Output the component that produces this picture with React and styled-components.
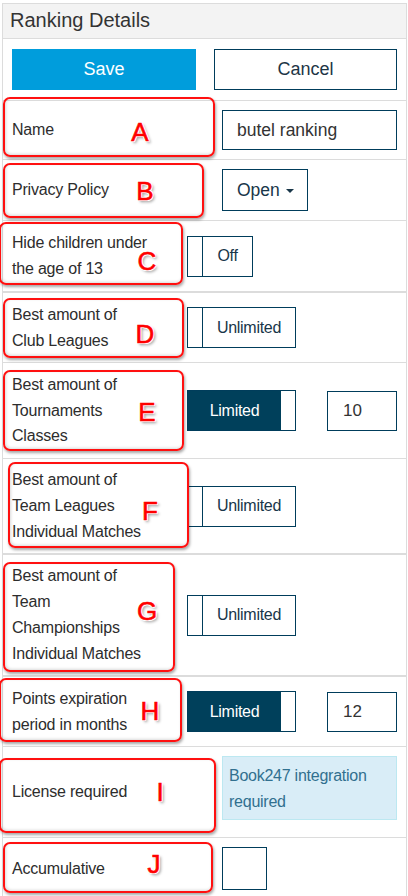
import React from 'react';
import styled, { createGlobalStyle } from 'styled-components';

const GlobalStyle = createGlobalStyle`
    body {
        margin: 0;
        background: #fff;
        font-family: "Liberation Sans", Arial, sans-serif;
    }
`

const Page = styled.div`
    position: relative;
    width: 408px;
    height: 896px;
    overflow: hidden;
`

const Panel = styled.div`
    margin: 3px 0 0 2px;
    width: 405px;
    box-sizing: border-box;
    border: 1px solid #dcdcdc;
    border-bottom: none;
`

const Header = styled.div`
    height: 34px;
    background: #f3f3f3;
    border-bottom: 1px solid #dcdcdc;
    padding-left: 7px;
    font-size: 20px;
    line-height: 32px;
    color: #333;
`

const Actions = styled.div`
    display: grid;
    grid-template-columns: 184px 183px;
    column-gap: 18px;
    padding: 10px 9px 10px 9px;
`

const SaveButton = styled.button`
    height: 41px;
    border: none;
    background: #009ddc;
    color: #fff;
    font-family: inherit;
    font-size: 18px;
`

const CancelButton = styled.button`
    height: 41px;
    border: 1px solid #003d5b;
    background: #fff;
    color: #1d3546;
    font-family: inherit;
    font-size: 18px;
`

// one setting line, label on the left, control on the right
const Row = styled.div`
    display: flex;
    align-items: center;
    box-sizing: border-box;
    height: ${p => p.$h}px;
    border-top: ${p => (p.$thick ? 2 : 1)}px solid #dcdcdc;
    padding: 0 9px 0 9px;
`

const Label = styled.div`
    width: ${p => p.$w}px;
    flex: none;
    font-size: 16px;
    line-height: 25.8px;
    letter-spacing: -0.2px;
    color: #2d2d2d;
    white-space: nowrap;
`

const TextInput = styled.div`
    box-sizing: border-box;
    width: ${p => p.$w}px;
    height: 40px;
    border: 1px solid #003d5b;
    padding-left: ${p => p.$pad}px;
    font-size: 17.5px;
    line-height: 38px;
    color: #333;
`

const DropButton = styled.div`
    box-sizing: border-box;
    display: flex;
    align-items: center;
    gap: 6px;
    width: 86px;
    height: 42px;
    border: 1px solid #003d5b;
    padding-left: 14px;
    font-size: 17.5px;
    color: #183649;
`

const Caret = styled.span`
    width: 0;
    height: 0;
    border-left: 4px solid transparent;
    border-right: 4px solid transparent;
    border-top: 4px solid #183649;
    margin-top: 2px;
`

const Toggle = styled.div`
    box-sizing: border-box;
    display: flex;
    width: ${p => p.$w}px;
    height: 41px;
    border: 1px solid #003d5b;
    flex: none;
`

const Knob = styled.div`
    width: 14px;
    flex: none;
    background: #fff;
    border-right: ${p => (p.$on ? 'none' : '1px solid #003d5b')};
`

const ToggleText = styled.div`
    flex: 1;
    display: flex;
    align-items: center;
    justify-content: center;
    font-size: 16px;
    letter-spacing: -0.3px;
    background: ${p => (p.$on ? '#00405b' : '#fff')};
    color: ${p => (p.$on ? '#fff' : '#183649')};
`

const ValueInput = styled(TextInput)`
    margin-left: 31px;
    font-size: 17px;
`

const Alert = styled.div`
    box-sizing: border-box;
    width: 175px;
    height: 64px;
    margin-bottom: 8px;
    padding: 6px 6px 0 6px;
    background: #d9edf7;
    border: 1px solid #bce8f1;
    color: #31708f;
    font-size: 16px;
    line-height: 26px;
    letter-spacing: -0.25px;
`

const Checkbox = styled.div`
    box-sizing: border-box;
    width: 45px;
    height: 43px;
    border: 1px solid #003d5b;
`

// red annotation frames drawn over the form
const Mark = styled.div`
    position: absolute;
    left: ${p => p.$x}px;
    top: ${p => p.$y}px;
    width: ${p => p.$w}px;
    height: ${p => p.$h}px;
    box-sizing: border-box;
    border: 2px solid #ff1010;
    border-radius: 7px;
    box-shadow: 1px 2px 3px rgba(0, 0, 0, 0.35), inset 1px -1px 3px rgba(0, 0, 0, 0.15);
`

const Letter = styled.div`
    position: absolute;
    left: ${p => p.$x}px;
    top: ${p => p.$y}px;
    transform: translate(-50%, -50%);
    font-size: 26px;
    line-height: 1;
    color: #ff0000;
    -webkit-text-stroke: 0.6px #ff0000;
    text-shadow: 1px 0 0 #fff, -1px 0 0 #fff, 0 1px 0 #fff, 0 -1px 0 #fff,
        1px 1px 0 #fff, -1px -1px 0 #fff, 1px -1px 0 #fff, -1px 1px 0 #fff,
        2px 2px 3px rgba(0, 0, 0, 0.45);
`

const marks = [
    { l: 'A', x: 3, y: 97, w: 212, h: 60, lx: 140, ly: 132 },
    { l: 'B', x: 3, y: 163, w: 201, h: 55, lx: 145, ly: 191 },
    { l: 'C', x: -1, y: 222, w: 184, h: 63, lx: 147, ly: 261 },
    { l: 'D', x: 3, y: 298, w: 181, h: 60, lx: 145, ly: 334 },
    { l: 'E', x: 3, y: 370, w: 181, h: 81, lx: 147, ly: 412 },
    { l: 'F', x: 8, y: 462, w: 181, h: 86, lx: 150, ly: 511 },
    { l: 'G', x: 3, y: 562, w: 172, h: 110, lx: 147, ly: 611 },
    { l: 'H', x: -1, y: 678, w: 183, h: 64, lx: 150, ly: 711 },
    { l: 'I', x: -1, y: 758, w: 217, h: 75, lx: 160, ly: 792 },
    { l: 'J', x: 3, y: 842, w: 210, h: 51, lx: 154, ly: 864 },
]

const Switch = ({ on, width, children }) => (
    <Toggle $w={width}>
        {on ? (
            <>
                <ToggleText $on>{children}</ToggleText>
                <Knob $on />
            </>
        ) : (
            <>
                <Knob />
                <ToggleText>{children}</ToggleText>
            </>
        )}
    </Toggle>
)

export default function App() {
    return (
        <Page>
            <GlobalStyle />
            <Panel>
                <Header>Ranking Details</Header>
                <Actions>
                    <SaveButton>Save</SaveButton>
                    <CancelButton>Cancel</CancelButton>
                </Actions>

                <Row $h={59}>
                    <Label $w={210}>Name</Label>
                    <TextInput $w={175} $pad={14}>butel ranking</TextInput>
                </Row>

                <Row $h={61}>
                    <Label $w={210}>Privacy Policy</Label>
                    <DropButton>Open <Caret /></DropButton>
                </Row>

                <Row $h={71}>
                    <Label $w={175}>Hide children under<br />the age of 13</Label>
                    <Switch width={66}>Off</Switch>
                </Row>

                <Row $h={71} $thick>
                    <Label $w={175}>Best amount of<br />Club Leagues</Label>
                    <Switch width={109}>Unlimited</Switch>
                </Row>

                <Row $h={96}>
                    <Label $w={175}>Best amount of<br />Tournaments<br />Classes</Label>
                    <Switch on width={109}>Limited</Switch>
                    <ValueInput $w={71} $pad={15}>10</ValueInput>
                </Row>

                <Row $h={95}>
                    <Label $w={175}>Best amount of<br />Team Leagues<br />Individual Matches</Label>
                    <Switch width={109}>Unlimited</Switch>
                </Row>

                <Row $h={122} $thick>
                    <Label $w={175}>Best amount of<br />Team<br />Championships<br />Individual Matches</Label>
                    <Switch width={109}>Unlimited</Switch>
                </Row>

                <Row $h={71} $thick>
                    <Label $w={175}>Points expiration<br />period in months</Label>
                    <Switch on width={109}>Limited</Switch>
                    <ValueInput $w={71} $pad={15}>12</ValueInput>
                </Row>

                <Row $h={91}>
                    <Label $w={210}>License required</Label>
                    <Alert>Book247 integration required</Alert>
                </Row>

                <Row $h={62}>
                    <Label $w={210}>Accumulative</Label>
                    <Checkbox />
                </Row>
            </Panel>

            {marks.map(m => (
                <React.Fragment key={m.l}>
                    <Mark $x={m.x} $y={m.y} $w={m.w} $h={m.h} />
                    <Letter $x={m.lx} $y={m.ly}>{m.l}</Letter>
                </React.Fragment>
            ))}
        </Page>
    )
}
